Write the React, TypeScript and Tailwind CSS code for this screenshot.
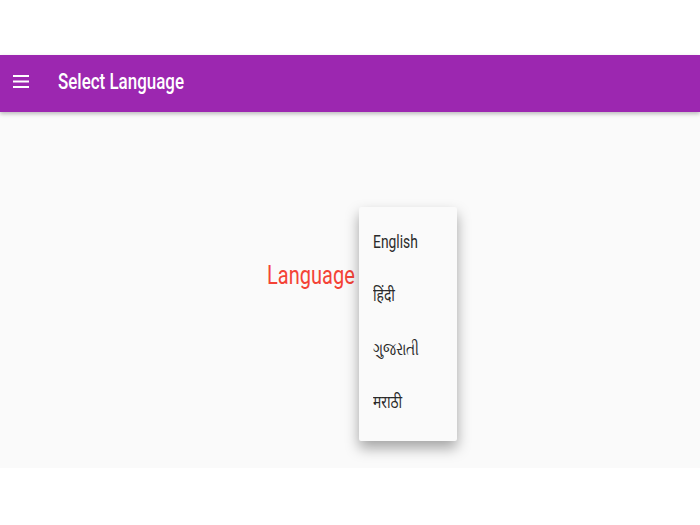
import React from "react";

const languages = ["English", "हिंदी", "ગુજરાતી", "मराठी"];

function MenuIcon() {
  return (
    <svg width="16" height="14" viewBox="0 0 16 14" className="block">
      <rect x="0" y="1" width="16" height="2" fill="white" />
      <rect x="0" y="6.5" width="16" height="2" fill="white" />
      <rect x="0" y="12" width="16" height="2" fill="white" />
    </svg>
  );
}

export default function App() {
  return (
    <div className="flex h-[525px] w-[700px] flex-col bg-white font-['Roboto','Noto_Sans',sans-serif]">
      <div className="h-[55px] bg-white" />
      <div className="relative z-10 flex h-[57px] items-center bg-[#9c27b0] shadow-[0_2px_4px_rgba(0,0,0,0.25)]">
        <div className="pb-[5px] pl-[13px]">
          <MenuIcon />
        </div>
        <span className="mb-[3px] ml-[29px] inline-block origin-left scale-x-[0.77] text-[22px] font-medium leading-[22px] text-white">
          Select Language
        </span>
      </div>
      <div className="relative h-[356px] bg-[#fafafa]">
        <div className="pl-[267px] pt-[150px]">
          <span className="inline-block origin-left scale-x-[0.77] text-[26px] leading-[26px] text-[#f44336]">
            Language
          </span>
        </div>
        <div className="absolute left-[359px] top-[95px] w-[98px] rounded-[2px] bg-[#fafafa] pb-[12px] pt-[8px] shadow-[0_7px_14px_rgba(0,0,0,0.35)]">
          {languages.map((lang) => (
            <div key={lang} className="flex h-[53.5px] items-center pl-[14px]">
              <span className="inline-block origin-left scale-x-[0.77] whitespace-nowrap text-[18px] leading-[18px] text-[#2a2a2a]">
                {lang}
              </span>
            </div>
          ))}
        </div>
      </div>
      <div className="flex-1 bg-white" />
    </div>
  );
}
